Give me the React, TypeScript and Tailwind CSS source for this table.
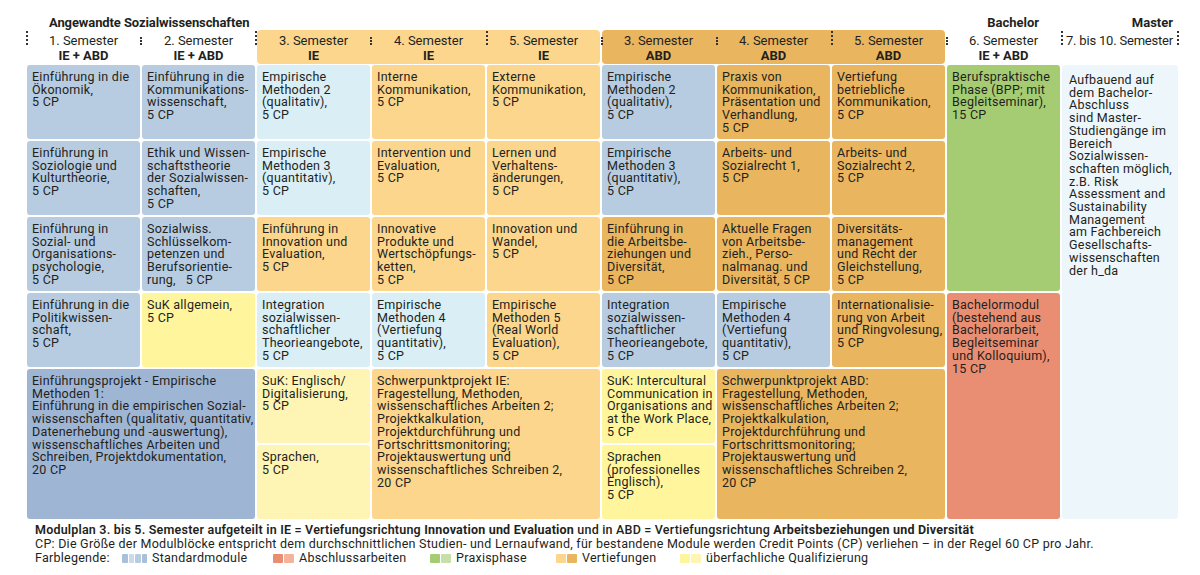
const BLUE = "bg-[#b7cce0]";
const BLUE_D = "bg-[#9fb5d4]";
const LBLUE = "bg-[#d9eef5]";
const LOR = "bg-[#fbd68c]";
const DOR = "bg-[#e9b55e]";
const YEL = "bg-[#fff59c]";
const LYEL = "bg-[#fef5b4]";

type Cell = { pos: string; bg: string; text: string };

const cells: Cell[] = [
  // row 1
  { pos: "col-start-1 row-start-1", bg: BLUE, text: "Einführung in die\nÖkonomik,\n5 CP" },
  { pos: "col-start-2 row-start-1", bg: BLUE, text: "Einführung in die\nKommunikations-\nwissenschaft,\n5 CP" },
  { pos: "col-start-3 row-start-1", bg: LBLUE, text: "Empirische\nMethoden 2\n(qualitativ),\n5 CP" },
  { pos: "col-start-4 row-start-1", bg: LOR, text: "Interne\nKommunikation,\n5 CP" },
  { pos: "col-start-5 row-start-1", bg: LOR, text: "Externe\nKommunikation,\n5 CP" },
  { pos: "col-start-6 row-start-1", bg: BLUE, text: "Empirische\nMethoden 2\n(qualitativ),\n5 CP" },
  { pos: "col-start-7 row-start-1", bg: DOR, text: "Praxis von\nKommunikation,\nPräsentation und\nVerhandlung,\n5 CP" },
  { pos: "col-start-8 row-start-1", bg: DOR, text: "Vertiefung\nbetriebliche\nKommunikation,\n5 CP" },
  // row 2
  { pos: "col-start-1 row-start-2", bg: BLUE, text: "Einführung in\nSoziologie und\nKulturtheorie,\n5 CP" },
  { pos: "col-start-2 row-start-2", bg: BLUE, text: "Ethik und Wissen-\nschaftstheorie\nder Sozialwissen-\nschaften,\n5 CP" },
  { pos: "col-start-3 row-start-2", bg: LBLUE, text: "Empirische\nMethoden 3\n(quantitativ),\n5 CP" },
  { pos: "col-start-4 row-start-2", bg: LOR, text: "Intervention und\nEvaluation,\n5 CP" },
  { pos: "col-start-5 row-start-2", bg: LOR, text: "Lernen und\nVerhaltens-\nänderungen,\n5 CP" },
  { pos: "col-start-6 row-start-2", bg: BLUE, text: "Empirische\nMethoden 3\n(quantitativ),\n5 CP" },
  { pos: "col-start-7 row-start-2", bg: DOR, text: "Arbeits- und\nSozialrecht 1,\n5 CP" },
  { pos: "col-start-8 row-start-2", bg: DOR, text: "Arbeits- und\nSozialrecht 2,\n5 CP" },
  // row 3
  { pos: "col-start-1 row-start-3", bg: BLUE, text: "Einführung in\nSozial- und\nOrganisations-\npsychologie,\n5 CP" },
  { pos: "col-start-2 row-start-3", bg: BLUE, text: "Sozialwiss.\nSchlüsselkom-\npetenzen und\nBerufsorientie-\nrung,   5 CP" },
  { pos: "col-start-3 row-start-3", bg: LOR, text: "Einführung in\nInnovation und\nEvaluation,\n5 CP" },
  { pos: "col-start-4 row-start-3", bg: LOR, text: "Innovative\nProdukte und\nWertschöpfungs-\nketten,\n5 CP" },
  { pos: "col-start-5 row-start-3", bg: LOR, text: "Innovation und\nWandel,\n5 CP" },
  { pos: "col-start-6 row-start-3", bg: DOR, text: "Einführung in\ndie Arbeitsbe-\nziehungen und\nDiversität,\n5 CP" },
  { pos: "col-start-7 row-start-3", bg: DOR, text: "Aktuelle Fragen\nvon Arbeitsbe-\nzieh., Perso-\nnalmanag. und\nDiversität, 5 CP" },
  { pos: "col-start-8 row-start-3", bg: DOR, text: "Diversitäts-\nmanagement\nund Recht der\nGleichstellung,\n5 CP" },
  // row 4
  { pos: "col-start-1 row-start-4", bg: BLUE, text: "Einführung in die\nPolitikwissen-\nschaft,\n5 CP" },
  { pos: "col-start-2 row-start-4", bg: YEL, text: "SuK allgemein,\n5 CP" },
  { pos: "col-start-3 row-start-4", bg: LBLUE, text: "Integration\nsozialwissen-\nschaftlicher\nTheorieangebote,\n5 CP" },
  { pos: "col-start-4 row-start-4", bg: LBLUE, text: "Empirische\nMethoden 4\n(Vertiefung\nquantitativ),\n5 CP" },
  { pos: "col-start-5 row-start-4", bg: LOR, text: "Empirische\nMethoden 5\n(Real World\nEvaluation),\n5 CP" },
  { pos: "col-start-6 row-start-4", bg: BLUE, text: "Integration\nsozialwissen-\nschaftlicher\nTheorieangebote,\n5 CP" },
  { pos: "col-start-7 row-start-4", bg: BLUE, text: "Empirische\nMethoden 4\n(Vertiefung\nquantitativ),\n5 CP" },
  { pos: "col-start-8 row-start-4", bg: DOR, text: "Internationalisie-\nrung von Arbeit\nund Ringvolesung,\n5 CP" },
  // rows 5-6
  {
    pos: "col-start-1 col-span-2 row-start-5 row-span-2",
    bg: BLUE_D,
    text: "Einführungsprojekt - Empirische\nMethoden 1:\nEinführung in die empirischen Sozial-\nwissenschaften (qualitativ, quantitativ,\nDatenerhebung und -auswertung),\nwissenschaftliches Arbeiten und\nSchreiben, Projektdokumentation,\n20 CP",
  },
  { pos: "col-start-3 row-start-5", bg: LYEL, text: "SuK: Englisch/\nDigitalisierung,\n5 CP" },
  { pos: "col-start-3 row-start-6", bg: LYEL, text: "Sprachen,\n5 CP" },
  {
    pos: "col-start-4 col-span-2 row-start-5 row-span-2",
    bg: LOR,
    text: "Schwerpunktprojekt IE:\nFragestellung, Methoden,\nwissenschaftliches Arbeiten 2;\nProjektkalkulation,\nProjektdurchführung und\nFortschrittsmonitoring;\nProjektauswertung und\nwissenschaftliches Schreiben 2,\n20 CP",
  },
  { pos: "col-start-6 row-start-5", bg: YEL, text: "SuK: Intercultural\nCommunication in\nOrganisations and\nat the Work Place,\n5 CP" },
  { pos: "col-start-6 row-start-6", bg: YEL, text: "Sprachen\n(professionelles\nEnglisch),\n5 CP" },
  {
    pos: "col-start-7 col-span-2 row-start-5 row-span-2",
    bg: DOR,
    text: "Schwerpunktprojekt ABD:\nFragestellung, Methoden,\nwissenschaftliches Arbeiten 2;\nProjektkalkulation,\nProjektdurchführung und\nFortschrittsmonitoring;\nProjektauswertung und\nwissenschaftliches Schreiben 2,\n20 CP",
  },
  // bachelor
  { pos: "col-start-9 row-start-1 row-span-3", bg: "bg-[#a6cc73]", text: "Berufspraktische\nPhase (BPP; mit\nBegleitseminar),\n15 CP" },
  {
    pos: "col-start-9 row-start-4 row-span-3",
    bg: "bg-[#ea8e73]",
    text: "Bachelormodul\n(bestehend aus\nBachelorarbeit,\nBegleitseminar\nund Kolloquium),\n15 CP",
  },
];

const masterText =
  "Aufbauend auf\ndem Bachelor-\nAbschluss\nsind Master-\nStudiengänge im\nBereich\nSozialwissen-\nschaften möglich,\nz.B. Risk\nAssessment and\nSustainability\nManagement\nam Fachbereich\nGesellschafts-\nwissenschaften\nder h_da";

// dotted markers in the header: [x, tall]
const dots: [number, boolean][] = [
  [26, true], [140, false], [255, true], [370, false], [486, true], [601, false],
  [716, false], [831, true], [946, false], [1061, true], [1177, true],
];

function Head({ sem, dir }: { sem: string; dir: string }) {
  return (
    <div className="flex flex-col items-center pt-[3px] leading-[15px]">
      <span className="text-[13px]">{sem}</span>
      <span className="text-[13px] font-bold">{dir}</span>
    </div>
  );
}

function Swatch({ colors }: { colors: string[] }) {
  return (
    <span className="inline-flex gap-[1px] mr-[5px] align-[-1px]">
      {colors.map((c, i) => (
        <span key={i} className={"inline-block h-[9px] w-[5.5px] rounded-[1px] " + c} />
      ))}
    </span>
  );
}

export default function App() {
  return (
    <div className="relative w-[1200px] h-[575px] bg-white text-[#231f20] font-['Roboto',sans-serif] overflow-hidden">
      {dots.map(([x, tall]) => (
        <div
          key={x}
          className={"absolute w-0 border-l-[2px] border-dotted border-[#333] " + (tall ? "top-[31px] h-[14px]" : "top-[37px] h-[8px]")}
          style={{ left: x }}
        />
      ))}

      <div className="ml-[27px] pt-[16px]">
        {/* title line */}
        <div className="grid grid-cols-[repeat(9,113px)_116px] gap-x-[2px] h-[14px] leading-[14px] text-[13px] font-bold">
          <div className="col-span-2 pl-[22px] whitespace-nowrap tracking-[-0.1px]">Angewandte Sozialwissenschaften</div>
          <div className="col-start-9 text-right pr-[21px]">Bachelor</div>
          <div className="col-start-10 text-right pr-[5px]">Master</div>
        </div>

        {/* semester header */}
        <div className="grid grid-cols-[repeat(9,113px)_116px] gap-x-[2px] h-[34px]">
          <Head sem="1. Semester" dir="IE + ABD" />
          <Head sem="2. Semester" dir="IE + ABD" />
          <div className="col-span-3 grid grid-cols-[113px_113px_113px] gap-x-[2px] rounded-[4px] bg-[#fbd68c]">
            <Head sem="3. Semester" dir="IE" />
            <Head sem="4. Semester" dir="IE" />
            <Head sem="5. Semester" dir="IE" />
          </div>
          <div className="col-span-3 grid grid-cols-[113px_113px_113px] gap-x-[2px] rounded-[4px] bg-[#e9b55e]">
            <Head sem="3. Semester" dir="ABD" />
            <Head sem="4. Semester" dir="ABD" />
            <Head sem="5. Semester" dir="ABD" />
          </div>
          <Head sem="6. Semester" dir="IE + ABD" />
          <div className="pt-[3px] pl-[4px] leading-[15px] text-[13px] tracking-[-0.2px] whitespace-nowrap">7. bis 10. Semester</div>
        </div>

        {/* modules */}
        <div className="mt-[1px] grid grid-cols-[repeat(9,113px)_116px] grid-rows-[repeat(6,74px)] gap-[2px] text-[12.5px] leading-[12.7px] tracking-[0.25px]">
          {cells.map((c, i) => (
            <div key={i} className={"rounded-[3px] px-[5px] pt-[6px] whitespace-pre " + c.pos + " " + c.bg}>
              {c.text}
            </div>
          ))}
          <div className="col-start-10 row-start-1 row-span-6 rounded-[3px] bg-[#edf6fa] pl-[7px] pt-[9px] whitespace-pre">
            {masterText}
          </div>
        </div>

        {/* legend */}
        <div className="pl-[8px] pt-[4px] text-[12.5px] leading-[14px] tracking-[0.25px] whitespace-nowrap">
          <div className="tracking-[0.2px]">
            <span className="font-semibold">Modulplan 3. bis 5. Semester aufgeteilt in IE = Vertiefungsrichtung </span>
            <span className="font-bold">Innovation und Evaluation</span>
            <span className="font-medium"> und in ABD = Vertiefungsrichtung </span>
            <span className="font-bold">Arbeitsbeziehungen und Diversität</span>
          </div>
          <div>
            CP: Die Größe der Modulblöcke entspricht dem durchschnittlichen Studien- und Lernaufwand, für bestandene Module werden Credit Points (CP) verliehen – in der Regel 60 CP pro Jahr.
          </div>
          <div className="flex items-center">
            <span className="w-[87px]">Farblegende:</span>
            <Swatch colors={["bg-[#a9c0da]", "bg-[#c9daea]", "bg-[#b7cce0]", "bg-[#a9c0da]"]} />
            <span className="w-[121px]">Standardmodule</span>
            <Swatch colors={["bg-[#ea8e73] w-[10px]", "bg-[#f2b59c] w-[10px]"]} />
            <span className="w-[131px]">Abschlussarbeiten</span>
            <Swatch colors={["bg-[#a6cc73] w-[10px]", "bg-[#c7dfa8] w-[10px]"]} />
            <span className="w-[100px]">Praxisphase</span>
            <Swatch colors={["bg-[#fbd68c] w-[10px]", "bg-[#e9b55e] w-[10px]"]} />
            <span className="w-[98px]">Vertiefungen</span>
            <Swatch colors={["bg-[#fff59c] w-[10px]", "bg-[#fef5b4] w-[10px]"]} />
            <span>überfachliche Qualifizierung</span>
          </div>
        </div>
      </div>
    </div>
  );
}
